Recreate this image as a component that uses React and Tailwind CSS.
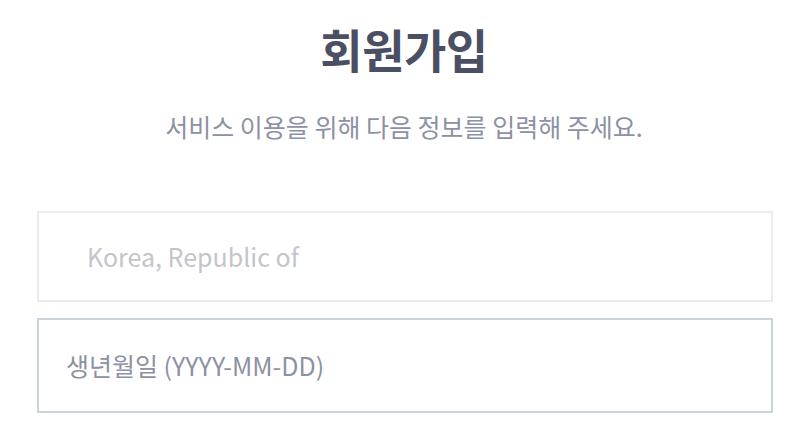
export default function App() {
  return (
    <div
      className="w-[800px] h-[425px] bg-white overflow-hidden"
      style={{ fontFamily: '"Noto Sans CJK KR", "Noto Sans", sans-serif' }}
    >
      <div className="flex flex-col items-center pt-[17px] pl-[8px]">
        <h1 className="text-[46px] leading-[62px] font-bold text-[#4b4f63] tracking-[-0.5px]">회원가입</h1>
        <p className="mt-[32px] text-[25px] leading-[30px] text-[#8c91a4]">
          서비스 이용을 위해 다음 정보를 입력해 주세요.
        </p>
      </div>
      <div className="mt-[70px] ml-[37px] w-[736px] flex flex-col gap-[16px]">
        <div className="h-[91px] border-2 border-[#e8ecf1] flex items-center pl-[48px]">
          <span className="text-[25px] text-[#c2c5cb]">Korea, Republic of</span>
        </div>
        <div className="h-[95px] border-2 border-[#cbd3dc] flex items-center pl-[27px]">
          <span className="text-[25px] text-[#8c91a4]">생년월일 (YYYY-MM-DD)</span>
        </div>
      </div>
    </div>
  );
}
